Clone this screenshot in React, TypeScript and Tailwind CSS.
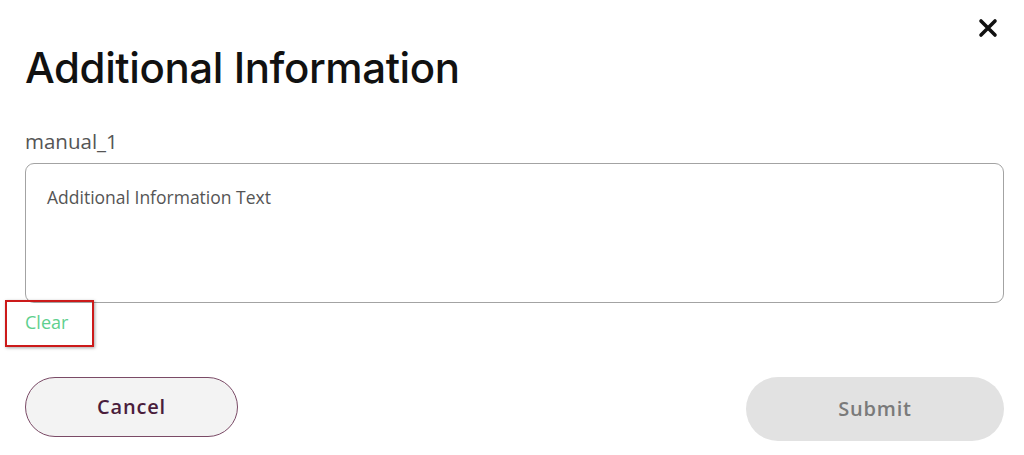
import React, { useState } from 'react';

const App: React.FC = () => {
  const [text, setText] = useState<string>('');

  return (
    <div className="relative min-h-screen bg-white pl-[25px] pr-[20px] pt-[17px] font-['Open_Sans',sans-serif]">
      {/* Close */}
      <button className="absolute right-[25px] top-[17px] flex h-[22px] w-[22px] items-center justify-center" aria-label="Close">
        <svg width="20" height="20" viewBox="0 0 20 20" fill="none">
          <path d="M3 3L17 17M17 3L3 17" stroke="#111" strokeWidth="3.6" strokeLinecap="round" />
        </svg>
      </button>

      {/* Header */}
      <h1 className="mt-[23px] text-[42px] leading-[56px] font-medium tracking-[-0.4px] text-[#111] font-['Inter',sans-serif]">
        Additional Information
      </h1>

      <div className="mt-[32px] text-[20.5px] leading-[26px] text-[#555]">manual_1</div>

      <textarea
        value={text}
        onChange={(e) => setText(e.target.value)}
        placeholder="Additional Information Text"
        className="mt-[9px] block h-[140px] w-full resize-none rounded-[9px] border border-[#a3a3a3] px-[21px] py-[21px] text-[17.5px] leading-[24px] text-[#555] placeholder:text-[#555] outline-none"
      />

      {/* Clear with annotation box */}
      <div className="relative mt-[6px] h-[26px]">
        <button className="text-[18px] leading-[26px] text-[#5ed08e]" onClick={() => setText('')}>
          Clear
        </button>
        <div className="pointer-events-none absolute left-[-20px] top-[-9px] h-[47px] w-[89px] border-2 border-[#cc1a1a] shadow-[1px_1px_3px_rgba(0,0,0,0.35)]" />
      </div>

      {/* Actions */}
      <div className="mt-[42px] flex items-start justify-between">
        <button className="h-[60px] w-[213px] rounded-full border border-[#7a4a66] bg-[#f3f3f3] text-[20px] font-semibold tracking-[0.8px] text-[#4a1d3c]">
          Cancel
        </button>
        <button disabled className="h-[64px] w-[258px] rounded-full bg-[#e2e2e2] text-[20px] font-semibold tracking-[0.8px] text-[#7a7a7a]">
          Submit
        </button>
      </div>
    </div>
  );
};

export default App;
